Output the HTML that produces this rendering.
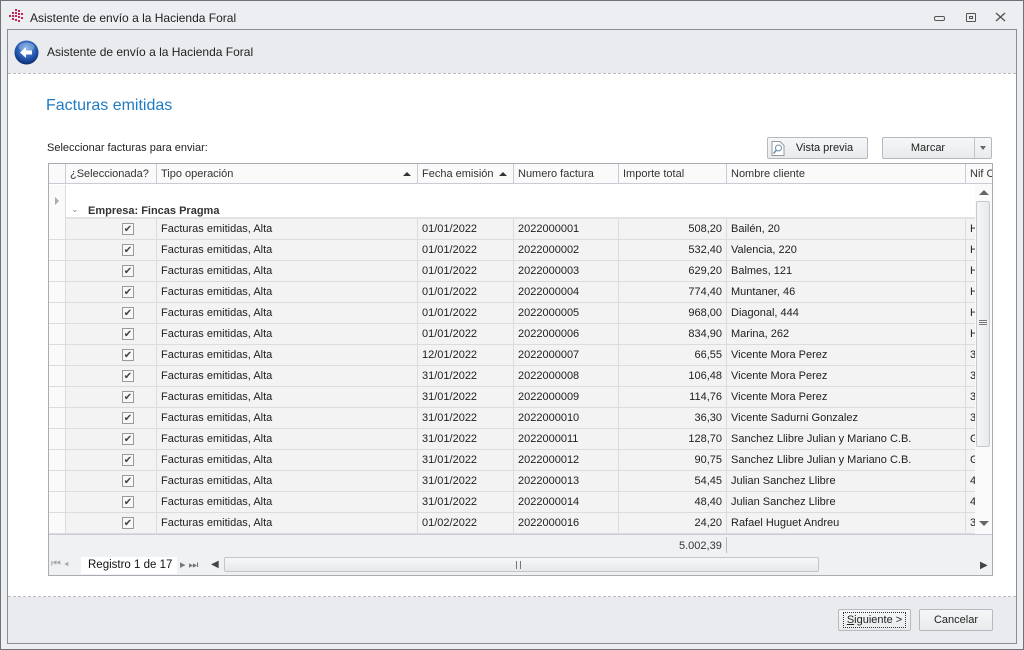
<!DOCTYPE html>
<html><head><meta charset="utf-8">
<style>
*{box-sizing:border-box;margin:0;padding:0}
body{width:1024px;height:650px;overflow:hidden;background:#e9ebee;font-family:"Liberation Sans",sans-serif;font-size:11px;color:#1e1e1e;position:relative}
.a{position:absolute}
.row{position:absolute;left:49px;width:926px;height:21px;background:#f3f3f3;border-bottom:1px solid #dcdcdc}
.c{position:absolute;top:0;height:20px;line-height:21px;border-right:1px solid #dcdcdc;white-space:nowrap;overflow:hidden;padding-left:4px}
.chk{position:absolute;left:56px;top:4px;width:12px;height:12px;border:1px solid #9a9a9a;background:#f8f8f8;font-size:10px;line-height:11px;text-align:center;color:#444}
.h{position:absolute;top:0;height:20px;line-height:20px;border-right:1px solid #c9ccd2;padding-left:4px;white-space:nowrap;overflow:hidden;color:#333}
.btn{position:absolute;border:1px solid #b6bac0;border-radius:2px;background:linear-gradient(#f6f7f8,#e8eaec);text-align:center;color:#222}
</style></head><body>
<div class="a" style="left:0;top:0;width:1024px;height:650px;border:1px solid #6f7377;background:#eceef1"></div>
<svg class="a" style="left:9px;top:9px" width="16" height="14" viewBox="0 0 16 14"><g fill="#c3245a"><rect x="6" y="0" width="2" height="2"/><rect x="9" y="1" width="2" height="2"/><rect x="3" y="3" width="2" height="2"/><rect x="6" y="3" width="2" height="2"/><rect x="9" y="4" width="2" height="2"/><rect x="12" y="4" width="2" height="2"/><rect x="0" y="6" width="2" height="2"/><rect x="3" y="6" width="2" height="2"/><rect x="6" y="6" width="2" height="2"/><rect x="9" y="7" width="2" height="2"/><rect x="12" y="8" width="2" height="2"/><rect x="3" y="9" width="2" height="2"/><rect x="6" y="10" width="2" height="2"/><rect x="9" y="11" width="2" height="2"/></g></svg>
<div class="a" style="left:30px;top:11px;font-size:12px;color:#222">Asistente de envío a la Hacienda Foral</div>
<div class="a" style="left:934px;top:16px;width:11px;height:5px;border:1px solid #555;border-radius:2px"></div>
<div class="a" style="left:966px;top:13px;width:10px;height:9px;border:1px solid #555;border-radius:1px"><div style="margin:2px 2px;width:4px;height:3px;border:1px solid #555"></div></div>
<svg class="a" style="left:995px;top:12px" width="11" height="10" viewBox="0 0 11 10"><path d="M1 1 L10 9 M10 1 L1 9" stroke="#555" stroke-width="1.4"/></svg>
<div class="a" style="left:7px;top:29px;width:1010px;height:615px;border:1px solid #8a8e93;background:#e9ebee"></div>
<svg class="a" style="left:14px;top:40px" width="25" height="25" viewBox="0 0 25 25"><defs><radialGradient id="g" cx="50%" cy="35%" r="65%"><stop offset="0" stop-color="#6aa3e8"/><stop offset="0.7" stop-color="#1d4fa7"/><stop offset="1" stop-color="#0b2b6b"/></radialGradient></defs><circle cx="12.5" cy="12.5" r="12" fill="url(#g)"/><ellipse cx="12.5" cy="7" rx="8" ry="4.5" fill="#fff" opacity=".25"/><path d="M6 12.5 L12 7 V10.5 H18 V14.5 H12 V18 Z" fill="#fff"/></svg>
<div class="a" style="left:47px;top:45px;font-size:12px;color:#222">Asistente de envío a la Hacienda Foral</div>
<div class="a" style="left:8px;top:73px;width:1008px;height:524px;background:#fff;border-top:1px dashed #b8bcc2;border-bottom:1px dashed #b8bcc2"></div>
<div class="a" style="left:46px;top:97px;font-size:16px;color:#1f7bc4">Facturas emitidas</div>
<div class="a" style="left:47px;top:142px;color:#222">Seleccionar facturas para enviar:</div>
<div class="btn" style="left:767px;top:137px;width:101px;height:22px;line-height:21px;padding-left:14px">Vista previa</div>
<svg class="a" style="left:771px;top:141px" width="14" height="15" viewBox="0 0 14 15"><path d="M1 .5H9L13 4.5V14.5H1Z" fill="#fff" stroke="#999"/><circle cx="7.5" cy="7" r="3" fill="none" stroke="#6a8fb0"/><path d="M5.5 9 L2.5 12.5" stroke="#6a8fb0" stroke-width="1.5"/></svg>
<div class="btn" style="left:882px;top:137px;width:110px;height:22px;line-height:21px;padding-right:18px">Marcar</div>
<div class="a" style="left:974px;top:138px;width:1px;height:20px;background:#c2c5ca"></div>
<div class="a" style="left:980px;top:146px;width:0;height:0;border-left:3px solid transparent;border-right:3px solid transparent;border-top:4px solid #666"></div>

<div class="a" style="left:48px;top:163px;width:945px;height:413px;border:1px solid #a9adb3;background:#fff"></div>
<div class="a" style="left:49px;top:164px;width:943px;height:20px;background:#fafafa;border-bottom:1px solid #c9ccd2">
<div class="h" style="left:0;width:17px;padding:0"></div>
<div class="h" style="left:17px;width:91px">¿Seleccionada?</div>
<div class="h" style="left:108px;width:261px">Tipo operación<span style="position:absolute;right:6px;top:8px;border-left:4px solid transparent;border-right:4px solid transparent;border-bottom:4px solid #333"></span></div>
<div class="h" style="left:369px;width:96px">Fecha emisión<span style="position:absolute;right:6px;top:8px;border-left:4px solid transparent;border-right:4px solid transparent;border-bottom:4px solid #333"></span></div>
<div class="h" style="left:465px;width:105px">Numero factura</div>
<div class="h" style="left:570px;width:108px">Importe total</div>
<div class="h" style="left:678px;width:239px">Nombre cliente</div>
<div class="h" style="left:917px;width:26px;border:none">Nif C</div>
</div>
<div class="a" style="left:49px;top:185px;width:17px;height:349px;border-right:1px solid #dcdcdc;background:#fafafa"></div>
<div class="a" style="left:55px;top:197px;border-top:4px solid transparent;border-bottom:4px solid transparent;border-left:4px solid #aaa"></div>
<div class="a" style="left:66px;top:217px;width:909px;height:2px;background:#e2e2e2"></div>
<div class="a" style="left:71px;top:204px;font-size:9px;color:#888">⌄</div>
<div class="a" style="left:88px;top:205px;font-weight:bold;color:#333">Empresa: Fincas Pragma</div>

<div id="rows"></div>
<script>
var d=[["01/01/2022","2022000001","508,20","Bailén, 20","H"],["01/01/2022","2022000002","532,40","Valencia, 220","H"],["01/01/2022","2022000003","629,20","Balmes, 121","H"],["01/01/2022","2022000004","774,40","Muntaner, 46","H"],["01/01/2022","2022000005","968,00","Diagonal, 444","H"],["01/01/2022","2022000006","834,90","Marina, 262","H"],["12/01/2022","2022000007","66,55","Vicente Mora Perez","3"],["31/01/2022","2022000008","106,48","Vicente Mora Perez","3"],["31/01/2022","2022000009","114,76","Vicente Mora Perez","3"],["31/01/2022","2022000010","36,30","Vicente Sadurni Gonzalez","3"],["31/01/2022","2022000011","128,70","Sanchez Llibre Julian y Mariano C.B.","G"],["31/01/2022","2022000012","90,75","Sanchez Llibre Julian y Mariano C.B.","G"],["31/01/2022","2022000013","54,45","Julian Sanchez Llibre","4"],["31/01/2022","2022000014","48,40","Julian Sanchez Llibre","4"],["01/02/2022","2022000016","24,20","Rafael Huguet Andreu","3"]];
var h="";d.forEach(function(r,i){var t=219+i*21;h+='<div class="row" style="top:'+t+'px"><div class="c" style="left:0;width:17px;background:#fafafa"></div><div class="c" style="left:17px;width:91px"><div class="chk">✔</div></div><div class="c" style="left:108px;width:261px">Facturas emitidas, Alta</div><div class="c" style="left:369px;width:96px">'+r[0]+'</div><div class="c" style="left:465px;width:105px">'+r[1]+'</div><div class="c" style="left:570px;width:108px;text-align:right;padding-right:4px">'+r[2]+'</div><div class="c" style="left:678px;width:239px">'+r[3]+'</div><div class="c" style="left:917px;width:9px;border:none">'+r[4]+'</div></div>';});
document.getElementById("rows").innerHTML=h;
</script>
<div class="a" style="left:975px;top:184px;width:17px;height:350px;background:#fafafa"></div>
<div class="a" style="left:979px;top:190px;border-left:5px solid transparent;border-right:5px solid transparent;border-bottom:5px solid #666"></div>
<div class="a" style="left:976px;top:201px;width:14px;height:246px;border:1px solid #c6c9ce;border-radius:2px;background:linear-gradient(90deg,#f4f5f6,#e9eaec)"></div>
<div class="a" style="left:979px;top:320px;width:8px;height:5px;border-top:1px solid #777;border-bottom:1px solid #777"><div style="margin-top:1px;height:1px;background:#777"></div></div>
<div class="a" style="left:979px;top:521px;border-left:5px solid transparent;border-right:5px solid transparent;border-top:5px solid #666"></div>
<div class="a" style="left:49px;top:534px;width:943px;height:22px;background:#f0f1f3;border-top:1px solid #c9ccd2"></div>
<div class="a" style="left:679px;top:540px;color:#333">5.002,39</div>
<div class="a" style="left:726px;top:537px;width:1px;height:16px;background:#bbb"></div>
<div class="a" style="left:49px;top:556px;width:943px;height:19px;background:#f0f1f3"></div>
<div class="a" style="left:51px;top:558px;font-size:11px;color:#aaa;letter-spacing:3px">⏮◂</div>
<div class="a" style="left:81px;top:557px;width:96px;height:17px;background:#fff"></div>
<div class="a" style="left:88px;top:559px;font-size:11.5px;color:#111">Registro 1 de 17</div>
<div class="a" style="left:180px;top:558px;font-size:11px;color:#777;letter-spacing:3px">▸⏭</div>
<div class="a" style="left:211px;top:559px;font-size:10px;color:#444">◀</div>
<div class="a" style="left:224px;top:557px;width:595px;height:15px;border:1px solid #c2c5ca;border-radius:2px;background:linear-gradient(#f7f7f8,#e6e8ea)"></div>
<div class="a" style="left:516px;top:561px;width:5px;height:8px;border-left:1px solid #777;border-right:1px solid #777"></div>
<div class="a" style="left:980px;top:560px;font-size:10px;color:#444">▶</div>

<div class="btn" style="left:838px;top:609px;width:73px;height:22px;line-height:21px"><span style="border:1px dotted #333;padding:1px 3px"><u>S</u>iguiente &gt;</span></div>
<div class="btn" style="left:919px;top:609px;width:74px;height:22px;line-height:21px">Cancelar</div>
</body></html>
